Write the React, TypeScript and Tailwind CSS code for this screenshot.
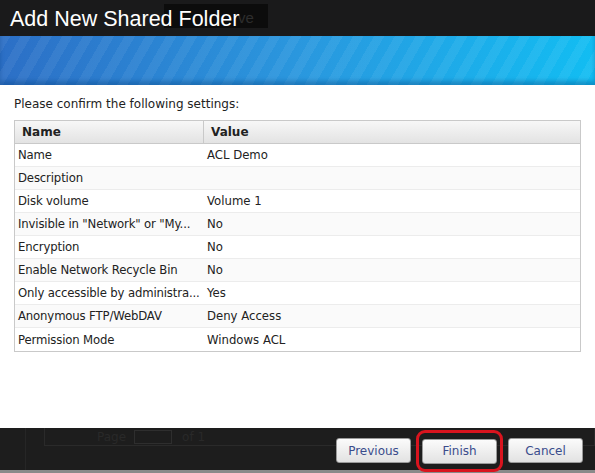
const rows = [
  { name: "Name", value: "ACL Demo" },
  { name: "Description", value: "" },
  { name: "Disk volume", value: "Volume 1" },
  { name: 'Invisible in "Network" or "My...', value: "No" },
  { name: "Encryption", value: "No" },
  { name: "Enable Network Recycle Bin", value: "No" },
  { name: "Only accessible by administra...", value: "Yes" },
  { name: "Anonymous FTP/WebDAV", value: "Deny Access" },
  { name: "Permission Mode", value: "Windows ACL" },
];

function Btn({ label }: { label: string }) {
  return (
    <button className="h-[25px] w-[75px] rounded-[3px] border border-[#9a9a9a] bg-[linear-gradient(#fbfbfb,#e2e2e2)] text-[12px] text-[#3a4c8c]">
      {label}
    </button>
  );
}

export default function App() {
  return (
    <div className="w-[595px] h-[473px] overflow-hidden flex flex-col bg-white font-['DejaVu_Sans',sans-serif]">
      {/* title bar */}
      <div className="relative h-[36px] shrink-0 bg-[#1a1a1b]">
        <div className="absolute left-[164px] top-[4px] h-[24px] w-[104px] bg-[#0c0c0c] pl-[74px] pt-[3px] text-[15px] text-[#2e2e2e] font-['Liberation_Sans',sans-serif]">
          ve
        </div>
        <div className="relative pl-[10px] pt-[6px] text-[21.5px] leading-[26px] text-white font-['Liberation_Sans',sans-serif]">
          Add New Shared Folder
        </div>
      </div>

      {/* banner */}
      <div className="h-[49px] shrink-0 bg-[repeating-linear-gradient(120deg,rgba(255,255,255,0.06)_0px,rgba(255,255,255,0.06)_9px,rgba(255,255,255,0)_9px,rgba(255,255,255,0)_18px),linear-gradient(90deg,#2c6fc6,#2a97de_50%,#12bdf2)] shadow-[inset_0_-4px_4px_rgba(0,60,120,0.35)]" />

      {/* content */}
      <div className="flex-1 px-[14px] pt-[12px]">
        <div className="text-[12px] leading-[14px] text-[#222]">Please confirm the following settings:</div>
        <div className="mt-[9px] w-[567px] border border-[#c9c9c9] text-[12px] text-[#222]">
          <div className="flex h-[23px] items-center bg-[linear-gradient(#f7f7f7,#e3e3e3)] border-b border-[#c9c9c9] font-bold">
            <div className="w-[189px] h-full flex items-center pl-[7px] border-r border-[#c9c9c9]">Name</div>
            <div className="pl-[7px]">Value</div>
          </div>
          {rows.map((r, i) => (
            <div
              key={i}
              className={`flex h-[23px] items-center text-[11.7px] leading-[14px] ${i < rows.length - 1 ? "border-b border-[#ececec]" : ""} ${i % 2 === 1 ? "bg-[#fafafa]" : "bg-white"}`}
            >
              <div className="w-[189px] pl-[3px] whitespace-nowrap tracking-[-0.15px]">{r.name}</div>
              <div className="pl-[3px]">{r.value}</div>
            </div>
          ))}
        </div>
      </div>

      {/* footer */}
      <div className="relative h-[45px] shrink-0 bg-[#1d1d1d] border-b-[3px] border-[#8a8a8a]">
        <div className="absolute left-[25px] top-0 bottom-0 w-px bg-[#262626]" />
        <div className="absolute left-[44px] top-0 h-[18px] w-[551px] border-x border-b border-[#2a2a2a] flex items-center text-[12px] text-[#292929]">
          <span className="ml-[52px]">Page</span>
          <span className="ml-[8px] h-[14px] w-[38px] border border-[#2e2e2e]" />
          <span className="ml-[10px]">of 1</span>
        </div>
        <div className="relative flex justify-end gap-[11px] pr-[12px] pt-[10px]">
          <Btn label="Previous" />
          <div className="relative">
            <Btn label="Finish" />
            <div className="absolute -left-[6px] -right-[6px] -top-[8px] -bottom-[8px] rounded-[9px] border-[3px] border-[#d9141e]" />
          </div>
          <Btn label="Cancel" />
        </div>
      </div>
    </div>
  );
}
